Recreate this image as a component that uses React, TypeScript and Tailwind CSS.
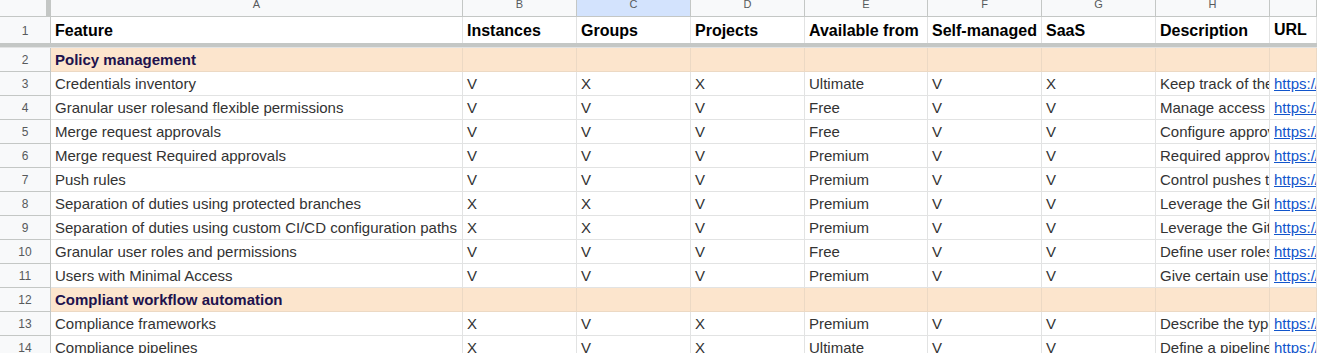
import React from "react";

type Row =
  | { kind: "section"; n: number; title: string }
  | {
      kind: "data";
      n: number;
      feature: string;
      b: string;
      c: string;
      d: string;
      tier: string;
      f: string;
      g: string;
      desc: string;
    };

const rows: Row[] = [
  { kind: "section", n: 2, title: "Policy management" },
  { kind: "data", n: 3, feature: "Credentials inventory", b: "V", c: "X", d: "X", tier: "Ultimate", f: "V", g: "X", desc: "Keep track of the credentials used by all of your users" },
  { kind: "data", n: 4, feature: "Granular user rolesand flexible permissions", b: "V", c: "V", d: "V", tier: "Free", f: "V", g: "V", desc: "Manage access and permissions with five different user roles" },
  { kind: "data", n: 5, feature: "Merge request approvals", b: "V", c: "V", d: "V", tier: "Free", f: "V", g: "V", desc: "Configure approvals required for merge requests" },
  { kind: "data", n: 6, feature: "Merge request Required approvals", b: "V", c: "V", d: "V", tier: "Premium", f: "V", g: "V", desc: "Required approvals for merge requests" },
  { kind: "data", n: 7, feature: "Push rules", b: "V", c: "V", d: "V", tier: "Premium", f: "V", g: "V", desc: "Control pushes to your repositories" },
  { kind: "data", n: 8, feature: "Separation of duties using protected branches", b: "X", c: "X", d: "V", tier: "Premium", f: "V", g: "V", desc: "Leverage the GitLab protected branches" },
  { kind: "data", n: 9, feature: "Separation of duties using custom CI/CD configuration paths", b: "X", c: "X", d: "V", tier: "Premium", f: "V", g: "V", desc: "Leverage the GitLab cross-project YAML" },
  { kind: "data", n: 10, feature: "Granular user roles and permissions", b: "V", c: "V", d: "V", tier: "Free", f: "V", g: "V", desc: "Define user roles and permissions" },
  { kind: "data", n: 11, feature: "Users with Minimal Access", b: "V", c: "V", d: "V", tier: "Premium", f: "V", g: "V", desc: "Give certain users access to a group" },
  { kind: "section", n: 12, title: "Compliant workflow automation" },
  { kind: "data", n: 13, feature: "Compliance frameworks", b: "X", c: "V", d: "X", tier: "Premium", f: "V", g: "V", desc: "Describe the type of compliance requirements" },
  { kind: "data", n: 14, feature: "Compliance pipelines", b: "X", c: "V", d: "X", tier: "Ultimate", f: "V", g: "V", desc: "Define a pipeline configuration to run" },
];

const cols = "grid grid-cols-[51px_412px_114px_114px_114px_123px_114px_114px_114px_1fr]";
const letters = ["A", "B", "C", "D", "E", "F", "G", "H", ""];
const heads = ["Feature", "Instances", "Groups", "Projects", "Available from", "Self-managed", "SaaS", "Description", "URL"];

const Cell: React.FC<{ children?: React.ReactNode; className?: string }> = ({ children, className = "" }) => (
  <div className={`h-[24px] border-r border-b border-[#e2e3e3] pl-[4px] pt-[2px] flex items-center overflow-hidden whitespace-nowrap ${className}`}>
    {children}
  </div>
);

const RowNum: React.FC<{ n: number }> = ({ n }) => (
  <div className="h-[24px] bg-[#f8f9fa] border-r border-b border-[#c4c7c5] flex items-center justify-center text-[12px] text-[#575a5c]">
    {n}
  </div>
);

export default function App() {
  return (
    <div className="w-[1317px] h-[353px] overflow-hidden bg-white font-['Liberation_Sans',Arial,sans-serif] text-[15px] text-[#333333]">
      {/* column letters */}
      <div className={cols}>
        <div className="h-[17px] bg-[#f8f9fa] border-b border-[#c4c7c5] flex justify-end">
          <div className="w-[5px] h-full bg-[#c4c7c5]" />
        </div>
        {letters.map((l, i) => (
          <div
            key={i}
            className={`h-[17px] border-r border-b border-[#c4c7c5] flex items-start justify-center leading-[9px] text-[11px] text-[#575a5c] ${
              l === "C" ? "bg-[#d3e3fd]" : "bg-[#f8f9fa]"
            }`}
          >
            {l}
          </div>
        ))}
      </div>

      {/* header row 1 */}
      <div className={cols}>
        <div className="h-[26px] bg-[#f8f9fa] border-r border-[#c4c7c5] flex items-center justify-center pt-[2px] text-[12px] text-[#575a5c]">1</div>
        {heads.map((h, i) => (
          <div
            key={h}
            className={`h-[26px] border-r border-[#e2e3e3] pl-[4px] flex overflow-hidden whitespace-nowrap font-bold text-[16px] text-black ${
              i === 8 ? "items-end pb-[1px]" : "items-center pt-[2px]"
            }`}
          >
            {h}
          </div>
        ))}
      </div>
      <div className="h-[4px] bg-[#c4c7c5]" />
      <div className="h-[1px] bg-[#e2e3e3]" />

      {rows.map((r) =>
        r.kind === "section" ? (
          <div key={r.n} className={cols}>
            <RowNum n={r.n} />
            <Cell className="bg-[#fce5cd] border-[#ecd9c4] font-bold text-[#20124d]">{r.title}</Cell>
            {Array.from({ length: 8 }).map((_, i) => (
              <Cell key={i} className="bg-[#fce5cd] border-[#ecd9c4]" />
            ))}
          </div>
        ) : (
          <div key={r.n} className={cols}>
            <RowNum n={r.n} />
            <Cell>{r.feature}</Cell>
            <Cell>{r.b}</Cell>
            <Cell>{r.c}</Cell>
            <Cell>{r.d}</Cell>
            <Cell>{r.tier}</Cell>
            <Cell>{r.f}</Cell>
            <Cell>{r.g}</Cell>
            <Cell>{r.desc}</Cell>
            <Cell>
              <span className="text-[#1155cc] underline">https://docs.gitlab.com/</span>
            </Cell>
          </div>
        )
      )}
    </div>
  );
}
